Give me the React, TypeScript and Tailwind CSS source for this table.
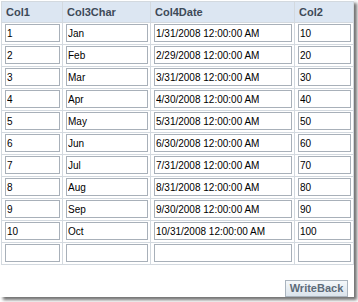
const rows = [
  ["1", "Jan", "1/31/2008 12:00:00 AM", "10"],
  ["2", "Feb", "2/29/2008 12:00:00 AM", "20"],
  ["3", "Mar", "3/31/2008 12:00:00 AM", "30"],
  ["4", "Apr", "4/30/2008 12:00:00 AM", "40"],
  ["5", "May", "5/31/2008 12:00:00 AM", "50"],
  ["6", "Jun", "6/30/2008 12:00:00 AM", "60"],
  ["7", "Jul", "7/31/2008 12:00:00 AM", "70"],
  ["8", "Aug", "8/31/2008 12:00:00 AM", "80"],
  ["9", "Sep", "9/30/2008 12:00:00 AM", "90"],
  ["10", "Oct", "10/31/2008 12:00:00 AM", "100"],
  ["", "", "", ""],
];

const headers = ["Col1", "Col3Char", "Col4Date", "Col2"];

export default function App() {
  return (
    <div className="w-[358px] h-[302px] bg-white font-['Liberation_Sans',Arial,sans-serif]">
      <div className="w-[354px] h-[297px] bg-white shadow-[3px_3px_3px_rgba(0,0,0,0.55)] flex flex-col pt-px pl-px">
        <table className="table-fixed border-collapse w-[352px]">
          <colgroup>
            <col className="w-[61px]" />
            <col className="w-[88px]" />
            <col className="w-[144px]" />
            <col className="w-[59px]" />
          </colgroup>
          <thead>
            <tr>
              {headers.map((h) => (
                <th
                  key={h}
                  className="h-[21px] p-0 pl-[4px] text-left align-middle bg-[#dce6f2] border border-[#d3d9df] text-[11px] font-bold text-[#3e4a58]"
                >
                  {h}
                </th>
              ))}
            </tr>
          </thead>
          <tbody>
            {rows.map((r, i) => (
              <tr key={i}>
                {r.map((v, j) => (
                  <td
                    key={j}
                    className="h-[22px] p-0 pl-[3px] pr-[2px] pb-px align-middle border border-[#d3d9df]"
                  >
                    <input
                      readOnly
                      value={v}
                      className="block w-full h-[18px] border border-[#a8b0b9] bg-white px-px text-[10px] text-black outline-none"
                    />
                  </td>
                ))}
              </tr>
            ))}
          </tbody>
        </table>
        <div className="flex justify-end pr-[6px] mt-[15px]">
          <button className="w-[63px] h-[17px] border border-[#aab4be] bg-gradient-to-b from-[#f5f8fa] to-[#dbe4ec] text-[11px] font-bold text-[#5d6b79] leading-none">
            WriteBack
          </button>
        </div>
      </div>
    </div>
  );
}
